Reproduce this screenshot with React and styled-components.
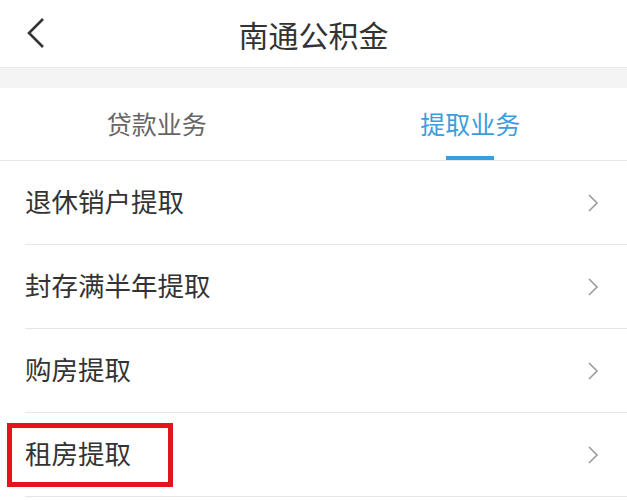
import React from "react";
import styled, { createGlobalStyle } from "styled-components";

const GlobalStyle = createGlobalStyle`
  html, body {
    margin: 0;
    padding: 0;
    background: #ffffff;
    font-family: "Noto Sans CJK SC", "Noto Sans", sans-serif;
  }
`;

const Page = styled.div`
  width: 627px;
  height: 500px;
  overflow: hidden;
  background: #ffffff;
`;

const NavBar = styled.header`
  height: 68px;
  display: flex;
  align-items: center;
  justify-content: center;
  position: relative;
  border-bottom: 1px solid #ececec;
  box-sizing: border-box;
`;

const BackButton = styled.div`
  position: absolute;
  left: 25px;
  top: 17px;
  width: 24px;
  height: 32px;
  display: flex;
`;

const Title = styled.h1`
  margin: 0;
  font-size: 30px;
  font-weight: 400;
  color: #333333;
`;

const Spacer = styled.div`
  height: 20px;
  background: #f4f4f4;
`;

const Tabs = styled.nav`
  display: grid;
  grid-template-columns: 1fr 1fr;
  height: 73px;
  border-bottom: 1px solid #e8e8e8;
  box-sizing: border-box;
`;

const Tab = styled.div`
  position: relative;
  display: flex;
  align-items: center;
  justify-content: center;
  padding-bottom: 2px;
  font-size: 25px;
  color: ${(p) => (p.active ? "#3c9ddd" : "#666666")};

  &::after {
    content: "";
    display: ${(p) => (p.active ? "block" : "none")};
    position: absolute;
    bottom: 0;
    left: 50%;
    transform: translateX(-50%);
    width: 48px;
    height: 4px;
    background: #3c9ddd;
  }
`;

const List = styled.ul`
  list-style: none;
  margin: 0;
  padding: 0 0 0 25px;
`;

const Row = styled.li`
  position: relative;
  height: 84px;
  display: flex;
  align-items: center;
  justify-content: space-between;
  padding-right: 28px;
  border-bottom: 1px solid #e6e6e6;
  box-sizing: border-box;
  font-size: 26.5px;
  color: #333333;

  &::before {
    content: "";
    display: ${(p) => (p.marked ? "block" : "none")};
    position: absolute;
    left: -18px;
    top: 10px;
    width: 166px;
    height: 64px;
    border: 5px solid #e3141b;
    box-sizing: border-box;
  }
`;

const Label = styled.span`
  position: relative;
  top: -2px;
`;

const Chevron = () => (
  <svg width="12" height="20" viewBox="0 0 12 20">
    <path d="M2 2 L10 10 L2 18" fill="none" stroke="#9a9a9a" strokeWidth="1.6" />
  </svg>
);

const items = [
  { label: "退休销户提取" },
  { label: "封存满半年提取" },
  { label: "购房提取" },
  { label: "租房提取", marked: true },
];

export default function App() {
  return (
    <Page>
      <GlobalStyle />
      <NavBar>
        <BackButton>
          <svg width="24" height="32" viewBox="0 0 24 32">
            <path d="M18 2 L4 16 L18 30" fill="none" stroke="#333333" strokeWidth="2.6" />
          </svg>
        </BackButton>
        <Title>南通公积金</Title>
      </NavBar>
      <Spacer />
      <Tabs>
        <Tab>贷款业务</Tab>
        <Tab active>提取业务</Tab>
      </Tabs>
      <List>
        {items.map((it) => (
          <Row key={it.label} marked={it.marked}>
            <Label>{it.label}</Label>
            <Chevron />
          </Row>
        ))}
      </List>
    </Page>
  );
}
